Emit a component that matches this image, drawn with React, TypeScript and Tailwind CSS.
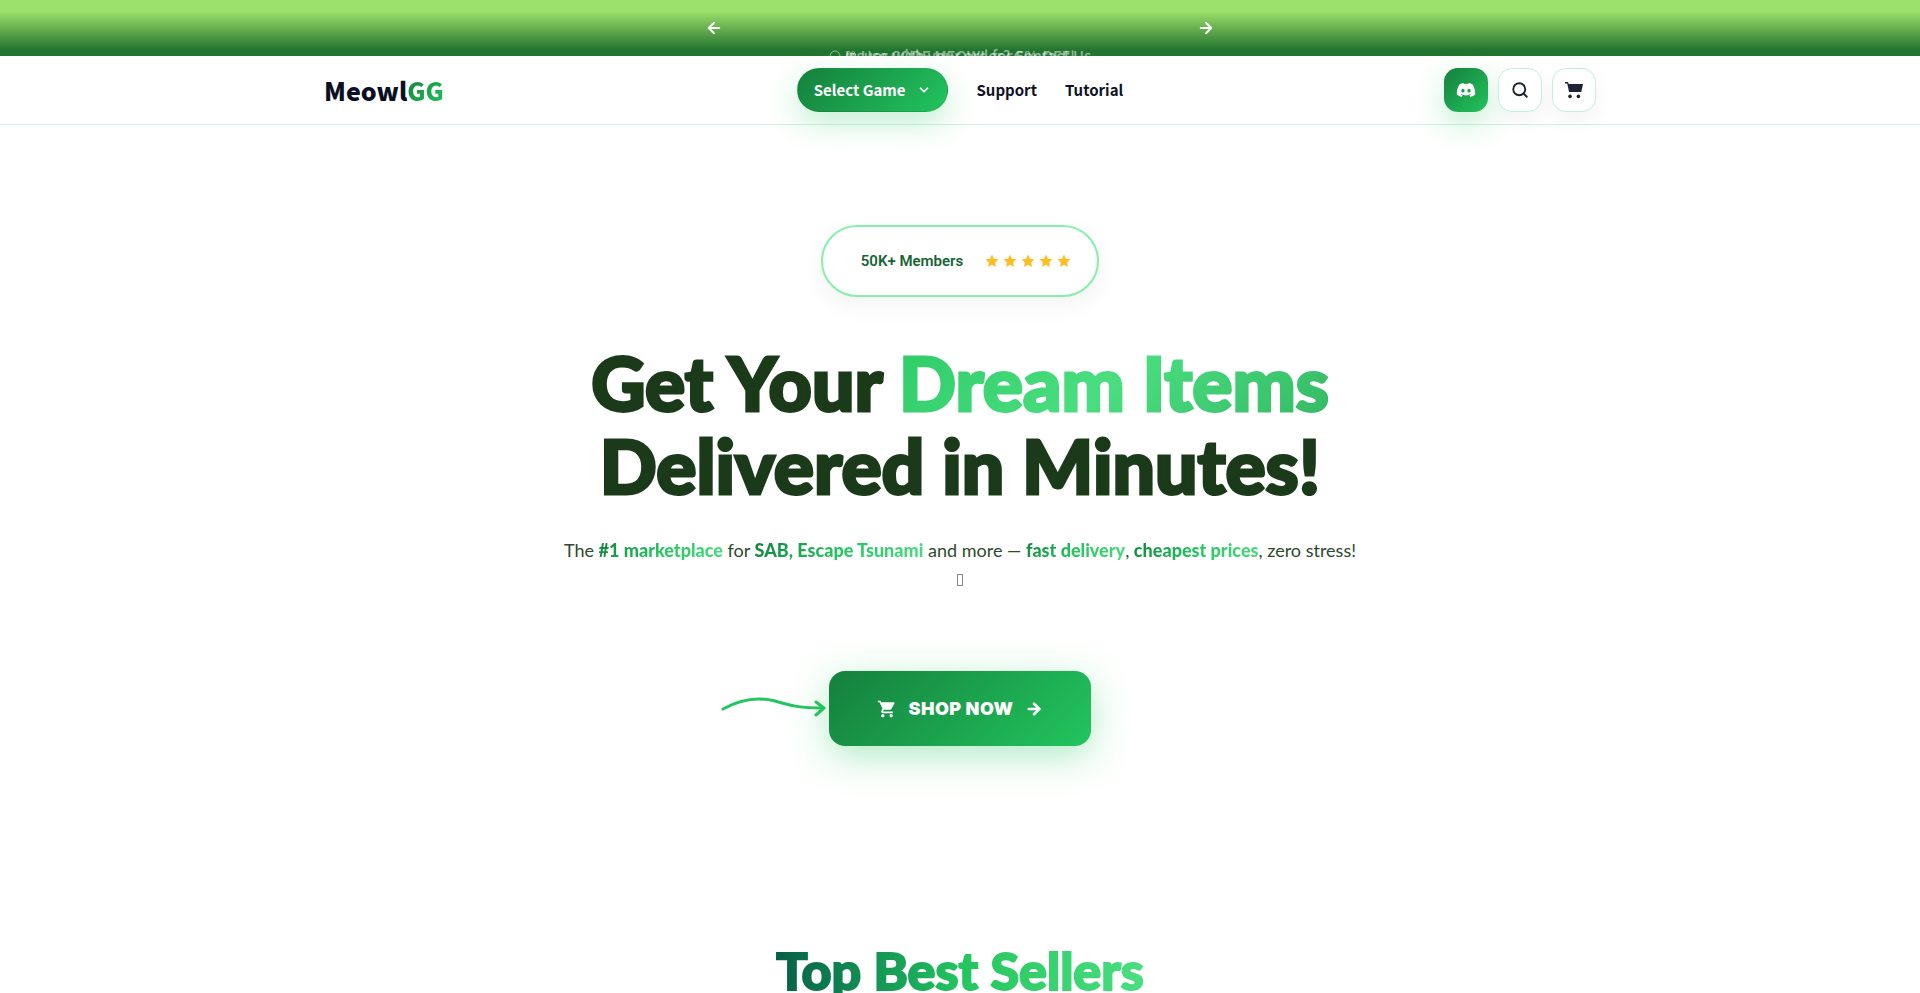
import React from 'react';
import { ArrowLeft, ArrowRight, ChevronDown, Gift, MessageCircle, Search } from 'lucide-react';
import { FaDiscord } from 'react-icons/fa';
import { MdShoppingCart } from 'react-icons/md';

const SANS = "font-['Noto_Sans_CJK_SC','Noto_Sans',sans-serif]";
const DISPLAY = "font-['Lato',sans-serif]";
const INTER = "font-['Inter',sans-serif]";

const SLIDES = [
  { icon: MessageCircle, text: 'Issues with your order? Contact Us' },
  { icon: Gift, text: 'Use CODE MEOWL for 5% OFF!' },
];

function PromoBar() {
  return (
    <div className="flex h-14 justify-center overflow-hidden bg-linear-to-b from-[#9be16b] from-20% to-[#20742f] to-90%">
      <div className="flex h-14 w-full max-w-[510px] items-center justify-between text-white">
        <button type="button" aria-label="Previous">
          <ArrowLeft className="size-[18px]" strokeWidth={2.5} />
        </button>
        <div className="grid flex-1 self-end">
          {SLIDES.map(({ icon: Icon, text }) => (
            <p
              key={text}
              className="col-start-1 row-start-1 mt-11 -mb-3 flex items-center justify-center gap-1 text-[15px] leading-6 font-medium text-white/50"
            >
              <Icon className="size-3" />
              {text}
            </p>
          ))}
        </div>
        <button type="button" aria-label="Next">
          <ArrowRight className="size-[18px]" strokeWidth={2.5} />
        </button>
      </div>
    </div>
  );
}

function Header() {
  const iconButton =
    'flex size-11 items-center justify-center rounded-[14px] border border-[#c5f0dc] bg-white text-[#1f2136] shadow-[0_8px_20px_rgba(0,0,0,0.05)]';

  return (
    <header className="relative border-b border-[#cdf3e4]">
      <div className="mx-auto grid h-[68px] w-full max-w-[1272px] grid-cols-[1fr_auto_1fr] items-center">
        <a href="#" className="text-[25px] leading-9 font-black text-[#0b0f24]">
          Meowl
          <span className="bg-linear-135 from-[#15803d] to-[#22c55e] bg-clip-text text-transparent">GG</span>
        </a>
        <nav className="flex items-center gap-7 text-[15px] font-bold text-[#0f1225]">
          <button
            type="button"
            className="flex h-11 items-center gap-3 rounded-full border border-[#15803d]/20 bg-linear-135 from-[#15803d] to-[#22c55e] px-4 text-white shadow-[0_12px_28px_rgba(34,197,94,0.25)]"
          >
            Select Game
            <ChevronDown className="size-[14px]" strokeWidth={3} />
          </button>
          <a href="#">Support</a>
          <a href="#">Tutorial</a>
        </nav>
        <div className="flex justify-end gap-[10px]">
          <a
            href="#"
            aria-label="Discord"
            className="flex size-11 items-center justify-center rounded-[14px] bg-linear-135 from-[#15803d] to-[#22c55e] text-white shadow-[0_12px_28px_rgba(34,197,94,0.25)]"
          >
            <FaDiscord className="size-5" />
          </a>
          <button type="button" aria-label="Search" className={iconButton}>
            <Search className="size-[18px]" strokeWidth={2.5} />
          </button>
          <button type="button" aria-label="Cart" className={iconButton}>
            <svg viewBox="0 0 18 18" className="size-[18px]" fill="currentColor">
              <path d="M0 1h3l.7 2H18l-1.7 8H4.1L2.2 2.4H0z" />
              <circle cx="5" cy="15.4" r="1.8" />
              <circle cx="13.4" cy="15.4" r="1.8" />
            </svg>
          </button>
        </div>
      </div>
    </header>
  );
}

function Star() {
  return (
    <svg viewBox="0 0 24 24" className="size-[14px]" fill="#fbbf24">
      <path d="M12 1l3.3 7.2 7.7.9-5.7 5.3 1.5 7.8L12 18.3l-6.8 3.9 1.5-7.8L1 9.1l7.7-.9z" />
    </svg>
  );
}

function Mark({ children }: { children: React.ReactNode }) {
  return (
    <strong className="bg-linear-135 from-[#15803d] via-[#22c55e] to-[#4ade80] bg-clip-text font-black text-transparent">
      {children}
    </strong>
  );
}

function Hero() {
  return (
    <section className="flex flex-col items-center pt-[100px]">
      <div className="flex h-[72px] items-center gap-[22px] rounded-full border-2 border-[#86efac] bg-white pr-[26px] pl-[38px] shadow-[0_8px_24px_rgba(0,0,0,0.05)]">
        <span className="font-['Roboto',sans-serif] text-[15px] font-semibold text-[#166534]">50K+ Members</span>
        <div className="flex gap-1" role="img" aria-label="5 stars">
          {[1, 2, 3, 4, 5].map((n) => (
            <Star key={n} />
          ))}
        </div>
      </div>

      <h1 className={`mt-11 text-center text-[75px] leading-[83px] font-black text-[#1a3a1a] [-webkit-text-stroke:3px_#1a3a1a] ${DISPLAY}`}>
        Get Your{' '}
        <span className="bg-linear-135 from-[#2dcc67] via-[#4ade80] to-[#34b964] bg-clip-text text-transparent [-webkit-text-stroke:3px_transparent]">
          Dream Items
        </span>
        <br />
        Delivered in Minutes!
      </h1>

      <p className={`mt-7 text-center text-lg leading-[30px] text-[#2d4a2d] ${DISPLAY}`}>
        The <Mark>#1 marketplace</Mark> for <Mark>SAB, Escape Tsunami</Mark> and more — <Mark>fast delivery</Mark>,{' '}
        <Mark>cheapest prices</Mark>, zero stress!
      </p>
      <span className="mt-[9px] h-3 w-[6px] border border-[#7b8a7b]" />

      <div className="mt-[85px] grid w-full grid-cols-[1fr_auto_1fr] items-center">
        <svg
          viewBox="0 0 106 20"
          className="mr-0.5 mb-1 h-5 w-[106px] justify-self-end"
          fill="none"
          stroke="#22c55e"
          strokeWidth="3"
          strokeLinecap="round"
          strokeLinejoin="round"
        >
          <path d="M2 12C20 2 38 0 54 4C70 9 80 11 102 11M95 5l8 6-8 7" />
        </svg>
        <a
          href="#"
          className={`flex h-[75px] items-center gap-3 rounded-2xl bg-linear-135 from-[#15803d] to-[#22c55e] px-12 text-lg font-black tracking-wide text-white shadow-[0_10px_36px_rgba(34,197,94,0.35)] ${INTER}`}
        >
          <MdShoppingCart className="size-5" />
          SHOP NOW
          <ArrowRight className="size-[18px]" strokeWidth={3.5} />
        </a>
      </div>
    </section>
  );
}

function BestSellers() {
  return (
    <section className="mt-[191px] flex justify-center">
      <h2 className={`bg-linear-to-r from-[#065f46] via-[#22c55e] to-[#4ade80] bg-clip-text text-[52px] leading-[66px] font-black text-transparent [-webkit-text-stroke:2px_transparent] ${DISPLAY}`}>
        Top Best Sellers
      </h2>
    </section>
  );
}

export default function App() {
  return (
    <div className={`h-screen overflow-hidden bg-[#fefffe] ${SANS}`}>
      <PromoBar />
      <Header />
      <main>
        <Hero />
        <BestSellers />
      </main>
    </div>
  );
}
